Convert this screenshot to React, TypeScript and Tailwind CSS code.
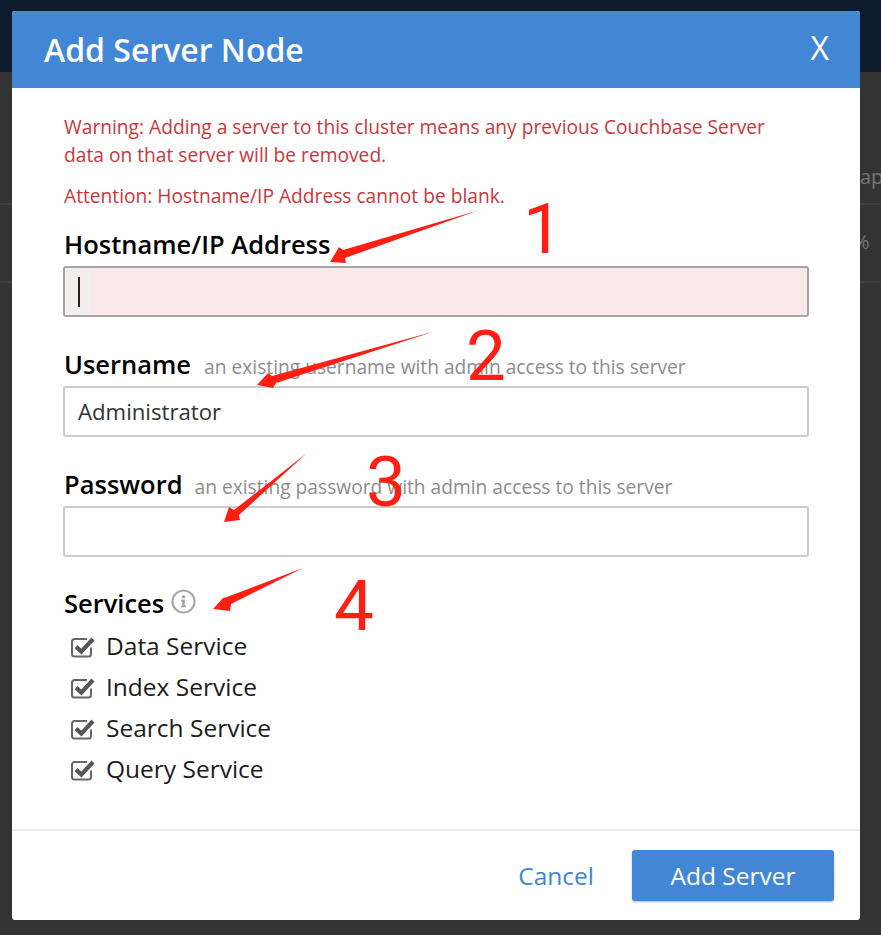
const font = { fontFamily: '"Open Sans", sans-serif' };

const services = ["Data Service", "Index Service", "Search Service", "Query Service"];

const CheckIcon = () => (
  <svg width="25" height="22" viewBox="0 0 25 22" fill="none" className="shrink-0">
    <path d="M20 11.5V18a2.5 2.5 0 0 1-2.5 2.5H3.5A2.5 2.5 0 0 1 1 18V5.5A2.5 2.5 0 0 1 3.5 3H16" stroke="#6a6662" strokeWidth="2" />
    <path d="M5 10.6 L10.4 15.6 L22 3" stroke="#565656" strokeWidth="4.2" />
  </svg>
);

const InfoIcon = () => (
  <svg width="25" height="25" viewBox="0 0 26 26" fill="none">
    <circle cx="13" cy="13" r="11.5" stroke="#a9a9a9" strokeWidth="2.2" />
    <circle cx="13" cy="8.2" r="1.8" fill="#a0a0a0" />
    <path d="M10.6 11.2h3.7v6h1.2v1.7h-4.9v-1.7h1.2v-4.3h-1.2z" fill="#a0a0a0" />
  </svg>
);

// red arrows scribbled on top of the screenshot
const Arrows = () => (
  <svg width="881" height="935" viewBox="0 0 881 935" className="absolute top-0 left-0 pointer-events-none">
    <path d="M478 210.5 L343 250 L339 247 L330 262 L346 263 L345 258 Z" fill="#fe1f14" />
    <path d="M434 331.5 L272 376 L268 373 L257 385 L273 388 L276 383 Z" fill="#fe1f14" />
    <path d="M307 453 L234 510 L229 507 L224 522 L240 520 L239 515 Z" fill="#fe1f14" />
    <path d="M304 567.5 L227 597 L223 598 L213 609 L230 611 L231 604 Z" fill="#fe1f14" />
  </svg>
);

const Mark = ({ n, className }: { n: string; className: string }) => (
  <span
    className={"absolute text-[#fe1f14] text-[71px] leading-none " + className}
    style={{ fontFamily: "Roboto, sans-serif" }}
  >
    {n}
  </span>
);

const Field = ({ label, hint, value, gap }: { label: string; hint: string; value?: string; gap: string }) => (
  <div className="mt-[25px]">
    <div className="flex items-baseline h-[44px] pt-[2px]">
      <span className="text-[25.5px] leading-[40px] font-semibold text-black">{label}</span>
      <span className={"text-[19.2px] text-[#8c8c8c] " + gap}>{hint}</span>
    </div>
    <input
      readOnly
      value={value ?? ""}
      className="block w-[746px] -ml-px h-[51px] border-2 border-[#cccccc] rounded-[3px] px-[13px] pb-px text-[22.2px] text-[#333] outline-none bg-white"
      style={font}
    />
  </div>
);

export default function App() {
  return (
    <div className="relative w-[881px] h-[935px] overflow-hidden bg-[#333333]" style={font}>
      <div className="h-[72px] bg-[#0f1c2e]" />
      <div className="h-[133px] border-b-2 border-[#3f3f3f] pl-[860px] pt-[90px] text-[20px] text-[#777]">ap</div>
      <div className="h-[78px] border-b-2 border-[#3f3f3f] pl-[853px] pt-[22px] text-[20px] text-[#777]">%</div>

      <div className="absolute top-[11px] left-[12px] w-[848px] h-[909px] bg-white rounded-[3px] flex flex-col overflow-hidden">
        <div className="h-[77px] shrink-0 bg-[#4187d6] flex items-start justify-between pl-[32px] pr-[31px]">
          <h2 className="text-[32px] font-semibold text-white leading-[77px]">Add Server Node</h2>
          <span className="text-[32px] text-white leading-[74px]">X</span>
        </div>

        <div className="flex-1 pt-[25px] px-[52px] text-[#cb363b]">
          <p className="text-[19.2px] leading-[28px] w-[720px]">
            Warning: Adding a server to this cluster means any previous Couchbase Server data on that server will be removed.
          </p>
          <p className="text-[19.2px] leading-[28px] mt-[13px]">Attention: Hostname/IP Address cannot be blank.</p>

          <div className="mt-[12px] h-[44px] pt-[2px] text-[25.5px] leading-[40px] font-semibold text-black">Hostname/IP Address</div>
          <div className="w-[746px] -ml-px h-[51px] border-2 border-[#a6a4a5] rounded-[3px] bg-[#f8e8e9] overflow-hidden flex">
            <div className="w-[25px] bg-[#f2eeed] flex items-center pl-[13px]">
              <div className="w-[2px] h-[30px] bg-[#222]" />
            </div>
          </div>

          <Field label="Username" hint="an existing username with admin access to this server" value="Administrator" gap="ml-[13px]" />
          <Field label="Password" hint="an existing password with admin access to this server" gap="ml-[12px]" />

          <div className="mt-[26px] flex items-center h-[40px]">
            <span className="text-[25.5px] font-semibold text-black">Services</span>
            <span className="ml-[7px] -mt-[4px]"><InfoIcon /></span>
          </div>
          <div className="mt-[3px] pl-[7px] flex flex-col">
            {services.map((s) => (
              <label key={s} className="flex items-center h-[41px] gap-[10px] text-[24.5px] text-[#1c1c1c]">
                <CheckIcon />
                {s}
              </label>
            ))}
          </div>
        </div>

        <div className="h-[91px] shrink-0 border-t-2 border-[#ebebeb] flex items-start justify-end pr-[26px] pt-[19px]">
          <button className="text-[24.5px] text-[#4187d6] mr-[38px] h-[51px] pt-[2px]">Cancel</button>
          <button className="w-[202px] h-[51px] bg-[#4187d6] rounded-[3px] text-[24.5px] text-white pt-[2px] shadow-[0_1px_2px_rgba(0,0,0,0.3)]">Add Server</button>
        </div>
      </div>

      <Arrows />
      <Mark n="1" className="left-[523px] top-[193px]" />
      <Mark n="2" className="left-[466px] top-[320px]" />
      <Mark n="3" className="left-[366px] top-[446px]" />
      <Mark n="4" className="left-[334px] top-[570px]" />
    </div>
  );
}
